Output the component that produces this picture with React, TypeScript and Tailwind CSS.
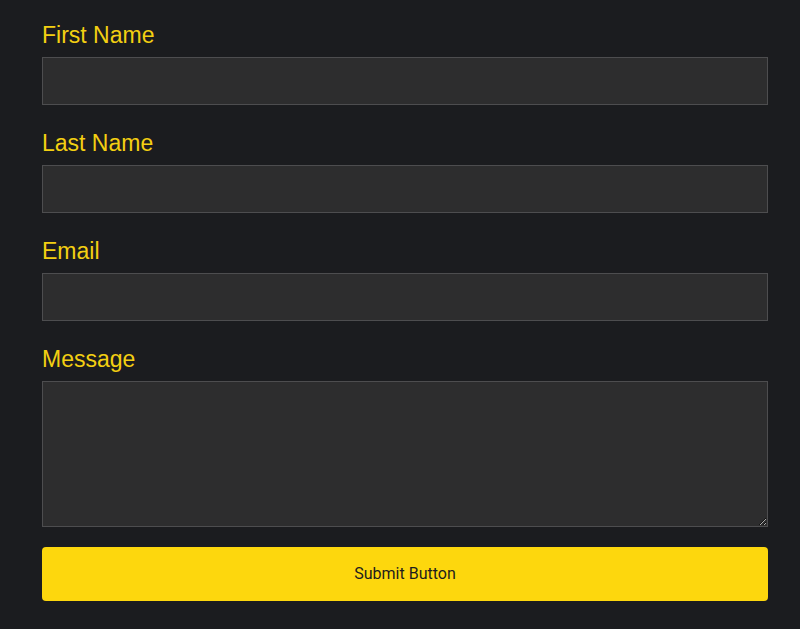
import type { ReactNode } from 'react';

function Field({ label, children }: { label: string; children: ReactNode }) {
  return (
    <div className="flex flex-col">
      <label className="mb-2 font-['Liberation_Sans',Arial,sans-serif] text-[23px] leading-[28px] text-[#f3cf12]">
        {label}
      </label>
      {children}
    </div>
  );
}

const inputClass =
  'w-full border border-[#4d4d4f] bg-[#2d2d2e] px-3 text-white outline-none';

export default function App() {
  return (
    <div className="min-h-[629px] bg-[#1b1c1f] pl-[42px] pr-[32px] pt-[21px]">
      <form className="flex flex-col gap-6" onSubmit={(e) => e.preventDefault()}>
        <Field label="First Name">
          <input type="text" className={`${inputClass} h-12`} />
        </Field>
        <Field label="Last Name">
          <input type="text" className={`${inputClass} h-12`} />
        </Field>
        <Field label="Email">
          <input type="email" className={`${inputClass} h-12`} />
        </Field>
        <Field label="Message">
          <textarea className={`${inputClass} block h-[146px] py-2 [color-scheme:dark]`} />
        </Field>
        <button
          type="submit"
          className="-mt-1 h-[54px] w-full rounded-[4px] bg-[#fdd70d] font-['Roboto',sans-serif] text-[16px] text-[#1d1d1d]"
        >
          Submit Button
        </button>
      </form>
    </div>
  );
}
